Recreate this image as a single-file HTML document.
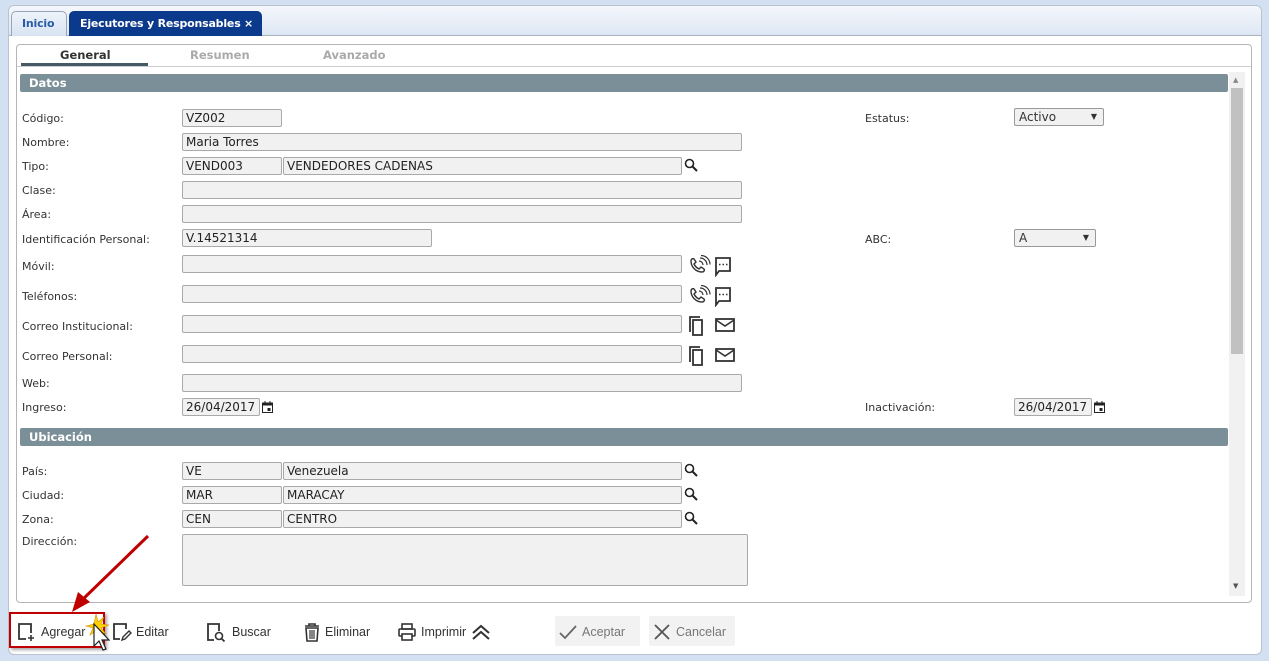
<!DOCTYPE html>
<html><head><meta charset="utf-8"><style>
*{box-sizing:border-box;margin:0;padding:0}
body{width:1269px;height:661px;background:#d3e0f2;font-family:"DejaVu Sans","Liberation Sans",sans-serif;font-size:11px;color:#333;position:relative;overflow:hidden}
.a{position:absolute}
.frame{left:8px;top:5px;width:1254px;height:650px;background:#fff;border:1px solid #b9c3cf;border-radius:6px}
.tabbar{left:9px;top:6px;width:1252px;height:30px;background:linear-gradient(#f4f7fc,#dde7f4);border-bottom:1px solid #a9b3bf;border-radius:6px 6px 0 0}
.tab{top:11px;height:25px;border:1px solid #9aa5b3;border-bottom:none;border-radius:5px 5px 0 0;font-weight:bold;font-size:11px;line-height:24px;padding:0 10px;white-space:nowrap;letter-spacing:-0.2px}
.panel{left:16px;top:44px;width:1236px;height:559px;border:1px solid #b5b5b5;border-radius:4px;background:#fff}
.sub{top:48px;font-weight:bold;font-size:11.5px;color:#aaa}
.hdr{left:20px;width:1208px;height:18px;background:#7b8f99;color:#fff;font-weight:bold;font-size:11.5px;line-height:18px;padding-left:9px;border-radius:2px}
.l{left:22px;font-size:11px;color:#333}
.i{height:18px;background:#f1f1f1;border:1px solid #a9a9a9;border-radius:2px;font-size:12px;line-height:16px;padding-left:3px;color:#222;white-space:nowrap}
.sel{height:18px;background:#f1f1f1;border:1px solid #999;border-radius:2px;font-size:12px;line-height:16px;padding-left:4px}
.sel:after{content:"▼";position:absolute;right:6px;top:0;font-size:8px}
.tb{top:622px;font-size:12.5px;color:#333;display:flex;align-items:center;gap:4px;font-family:"Liberation Sans",sans-serif}
svg{display:block}
</style></head><body>
<div class="a frame"></div>
<div class="a tabbar"></div>
<div class="a tab" style="left:11px;width:56px;background:linear-gradient(#eef3fa,#d8e4f3);color:#2a5aa8">Inicio</div>
<div class="a tab" style="left:69px;width:193px;background:#0b3a8c;color:#fff;border-color:#0b3a8c">Ejecutores y Responsables <span style="position:absolute;right:8px">×</span></div>
<div class="a panel"></div>
<div class="a sub" style="left:60px;color:#333">General</div>
<div class="a" style="left:21px;top:63px;width:127px;height:3px;background:#455a64"></div>
<div class="a" style="left:17px;top:66px;width:1234px;height:1px;background:#ccc"></div>
<div class="a sub" style="left:190px">Resumen</div>
<div class="a sub" style="left:323px">Avanzado</div>
<div class="a" style="left:1229px;top:72px;width:16px;height:524px;background:#f1f1f1"></div>
<div class="a" style="left:1231px;top:88px;width:12px;height:266px;background:#c1c1c1"></div>
<div class="a" style="left:1233px;top:76px;font-size:7px;color:#888">▲</div>
<div class="a" style="left:1233px;top:582px;font-size:7px;color:#555">▼</div>

<div class="a hdr" style="top:74px">Datos</div>
<div class="a l" style="top:112px">Código:</div><div class="a i" style="left:182px;top:109px;width:100px">VZ002</div>
<div class="a l" style="left:865px;top:112px">Estatus:</div><div class="a sel" style="left:1014px;top:108px;width:90px">Activo</div>
<div class="a l" style="top:136px">Nombre:</div><div class="a i" style="left:182px;top:133px;width:560px">Maria Torres</div>
<div class="a l" style="top:160px">Tipo:</div><div class="a i" style="left:182px;top:157px;width:100px">VEND003</div><div class="a i" style="left:283px;top:157px;width:399px">VENDEDORES CADENAS</div>
<div class="a l" style="top:184px">Clase:</div><div class="a i" style="left:182px;top:181px;width:560px"></div>
<div class="a l" style="top:208px">Área:</div><div class="a i" style="left:182px;top:205px;width:560px"></div>
<div class="a l" style="top:233px">Identificación Personal:</div><div class="a i" style="left:182px;top:229px;width:250px">V.14521314</div>
<div class="a l" style="left:865px;top:233px">ABC:</div><div class="a sel" style="left:1014px;top:229px;width:82px">A</div>
<div class="a l" style="top:260px">Móvil:</div><div class="a i" style="left:182px;top:255px;width:500px"></div>
<div class="a l" style="top:290px">Teléfonos:</div><div class="a i" style="left:182px;top:285px;width:500px"></div>
<div class="a l" style="top:320px">Correo Institucional:</div><div class="a i" style="left:182px;top:315px;width:500px"></div>
<div class="a l" style="top:350px">Correo Personal:</div><div class="a i" style="left:182px;top:345px;width:500px"></div>
<div class="a l" style="top:377px">Web:</div><div class="a i" style="left:182px;top:374px;width:560px"></div>
<div class="a l" style="top:401px">Ingreso:</div><div class="a i" style="left:182px;top:398px;width:78px">26/04/2017</div>
<div class="a l" style="left:865px;top:401px">Inactivación:</div><div class="a i" style="left:1014px;top:398px;width:78px">26/04/2017</div>

<div class="a hdr" style="top:428px">Ubicación</div>
<div class="a l" style="top:465px">País:</div><div class="a i" style="left:182px;top:462px;width:100px">VE</div><div class="a i" style="left:283px;top:462px;width:399px">Venezuela</div>
<div class="a l" style="top:489px">Ciudad:</div><div class="a i" style="left:182px;top:486px;width:100px">MAR</div><div class="a i" style="left:283px;top:486px;width:399px">MARACAY</div>
<div class="a l" style="top:513px">Zona:</div><div class="a i" style="left:182px;top:510px;width:100px">CEN</div><div class="a i" style="left:283px;top:510px;width:399px">CENTRO</div>
<div class="a l" style="top:535px">Dirección:</div><div class="a i" style="left:182px;top:534px;width:566px;height:52px"></div>

<svg class="a" style="left:684px;top:158px" width="14" height="14" viewBox="0 0 14 14"><circle cx="5.5" cy="5.5" r="4" fill="none" stroke="#222" stroke-width="1.6"/><path d="M8.5 8.5L13 13" stroke="#222" stroke-width="2"/></svg>
<svg class="a" style="left:684px;top:463px" width="14" height="14" viewBox="0 0 14 14"><circle cx="5.5" cy="5.5" r="4" fill="none" stroke="#222" stroke-width="1.6"/><path d="M8.5 8.5L13 13" stroke="#222" stroke-width="2"/></svg>
<svg class="a" style="left:684px;top:487px" width="14" height="14" viewBox="0 0 14 14"><circle cx="5.5" cy="5.5" r="4" fill="none" stroke="#222" stroke-width="1.6"/><path d="M8.5 8.5L13 13" stroke="#222" stroke-width="2"/></svg>
<svg class="a" style="left:684px;top:511px" width="14" height="14" viewBox="0 0 14 14"><circle cx="5.5" cy="5.5" r="4" fill="none" stroke="#222" stroke-width="1.6"/><path d="M8.5 8.5L13 13" stroke="#222" stroke-width="2"/></svg>
<svg class="a" style="left:687px;top:255px" width="44" height="22" viewBox="0 0 44 22"><path d="M4 6c0-2 2-3 3-2l2 3-2 2c1 2 3 4 5 5l2-2 3 2c1 1 0 3-2 3C9 17 4 12 4 6z" fill="none" stroke="#333" stroke-width="1.4"/><path d="M12 6a4 4 0 014 4M13 3a7 7 0 017 7M14 0.5a9 9 0 019 9" fill="none" stroke="#333" stroke-width="1.2"/><path d="M29 3h14v13h-11l-3 4z" fill="none" stroke="#333" stroke-width="1.8"/><path d="M32 9.5h1.5M35.5 9.5h1.5M39 9.5h1.5" stroke="#333" stroke-width="1.6"/></svg>
<svg class="a" style="left:687px;top:285px" width="44" height="22" viewBox="0 0 44 22"><path d="M4 6c0-2 2-3 3-2l2 3-2 2c1 2 3 4 5 5l2-2 3 2c1 1 0 3-2 3C9 17 4 12 4 6z" fill="none" stroke="#333" stroke-width="1.4"/><path d="M12 6a4 4 0 014 4M13 3a7 7 0 017 7M14 0.5a9 9 0 019 9" fill="none" stroke="#333" stroke-width="1.2"/><path d="M29 3h14v13h-11l-3 4z" fill="none" stroke="#333" stroke-width="1.8"/><path d="M32 9.5h1.5M35.5 9.5h1.5M39 9.5h1.5" stroke="#333" stroke-width="1.6"/></svg>
<svg class="a" style="left:688px;top:315px" width="50" height="22" viewBox="0 0 50 22"><path d="M2 17V2h10" fill="none" stroke="#333" stroke-width="1.8"/><rect x="5" y="5" width="9" height="15" fill="none" stroke="#333" stroke-width="1.8"/><rect x="28" y="4" width="18" height="12" fill="none" stroke="#333" stroke-width="1.8"/><path d="M28 5l9 6 9-6" fill="none" stroke="#333" stroke-width="1.6"/></svg>
<svg class="a" style="left:688px;top:345px" width="50" height="22" viewBox="0 0 50 22"><path d="M2 17V2h10" fill="none" stroke="#333" stroke-width="1.8"/><rect x="5" y="5" width="9" height="15" fill="none" stroke="#333" stroke-width="1.8"/><rect x="28" y="4" width="18" height="12" fill="none" stroke="#333" stroke-width="1.8"/><path d="M28 5l9 6 9-6" fill="none" stroke="#333" stroke-width="1.6"/></svg>
<svg class="a" style="left:262px;top:401px" width="11" height="12" viewBox="0 0 11 12"><rect x="0.5" y="2" width="10" height="9.5" fill="none" stroke="#222"/><rect x="0.5" y="2" width="10" height="2.5" fill="#222"/><rect x="5.5" y="7" width="3" height="3" fill="#222"/><path d="M3 0v3M8 0v3" stroke="#222"/></svg>
<svg class="a" style="left:1094px;top:401px" width="11" height="12" viewBox="0 0 11 12"><rect x="0.5" y="2" width="10" height="9.5" fill="none" stroke="#222"/><rect x="0.5" y="2" width="10" height="2.5" fill="#222"/><rect x="5.5" y="7" width="3" height="3" fill="#222"/><path d="M3 0v3M8 0v3" stroke="#222"/></svg>

<div class="a" style="left:555px;top:616px;width:85px;height:30px;background:#f2f2f2;border-radius:2px"></div>
<div class="a" style="left:649px;top:616px;width:86px;height:30px;background:#f2f2f2;border-radius:2px"></div>
<div class="a tb" style="left:17px"><svg width="20" height="20" viewBox="0 0 20 20"><path d="M9 17H2V2h12v9" fill="none" stroke="#333" stroke-width="1.8"/><path d="M14 13v6M11 16h6" stroke="#333" stroke-width="1.6"/></svg>Agregar</div>
<div class="a tb" style="left:112px"><svg width="20" height="20" viewBox="0 0 20 20"><path d="M8 17H2V2h12v5" fill="none" stroke="#333" stroke-width="1.8"/><path d="M10 18l1-3 6-6 2 2-6 6z" fill="none" stroke="#333" stroke-width="1.4"/></svg>Editar</div>
<div class="a tb" style="left:206px"><svg width="22" height="20" viewBox="0 0 22 20"><path d="M8 18H2V2h11v7" fill="none" stroke="#333" stroke-width="1.8"/><circle cx="13" cy="14" r="3.5" fill="none" stroke="#333" stroke-width="1.6"/><path d="M15.5 16.5l3 3" stroke="#333" stroke-width="1.8"/></svg>Buscar</div>
<div class="a tb" style="left:303px"><svg width="18" height="20" viewBox="0 0 18 20"><path d="M2 4h14M6 4V2h6v2" fill="none" stroke="#333" stroke-width="1.6"/><path d="M3 6h12l-1 13H4z" fill="none" stroke="#333" stroke-width="1.6"/><path d="M7 8v9M9 8v9M11 8v9" stroke="#333" stroke-width="1.2"/></svg>Eliminar</div>
<div class="a tb" style="left:397px"><svg width="20" height="20" viewBox="0 0 20 20"><rect x="5" y="2" width="10" height="5" fill="none" stroke="#333" stroke-width="1.6"/><rect x="2" y="7" width="16" height="7" rx="1" fill="none" stroke="#333" stroke-width="1.6"/><rect x="5" y="12" width="10" height="6" fill="#fff" stroke="#333" stroke-width="1.6"/></svg>Imprimir <svg width="22" height="18" viewBox="0 0 22 18"><path d="M3 10l8-7 8 7M3 16l8-7 8 7" fill="none" stroke="#333" stroke-width="2"/></svg></div>
<div class="a tb" style="left:558px;color:#777"><svg width="20" height="20" viewBox="0 0 20 20"><path d="M2 11l5 5L18 4" fill="none" stroke="#666" stroke-width="1.8"/></svg>Aceptar</div>
<div class="a tb" style="left:652px;color:#777"><svg width="20" height="20" viewBox="0 0 20 20"><path d="M3 3l14 14M17 3L3 17" stroke="#555" stroke-width="1.8"/></svg>Cancelar</div>

<div class="a" style="left:9px;top:612px;width:96px;height:36px;border:2px solid #c00000;box-shadow:2px 2px 3px rgba(0,0,0,.35)"></div>
<svg class="a" style="left:60px;top:530px" width="100" height="90" viewBox="0 0 100 90"><path d="M88 6L20 72" stroke="#c00000" stroke-width="3"/><path d="M12 82l6-20 12 10z" fill="#c00000"/></svg>
<svg class="a" style="left:84px;top:612px" width="32" height="40" viewBox="0 0 32 40"><path d="M12 2l2 8 6-5-3 7 8 1-8 3 5 6-7-3-1 7-2-7-6 4 3-7-7-2 8-2z" fill="#ffd200" stroke="#d09000" stroke-width="0.6"/><path d="M10 12v22l5-5 4 9 3-1-4-9h7z" fill="#fff" stroke="#222" stroke-width="1.2"/></svg>
</body></html>
